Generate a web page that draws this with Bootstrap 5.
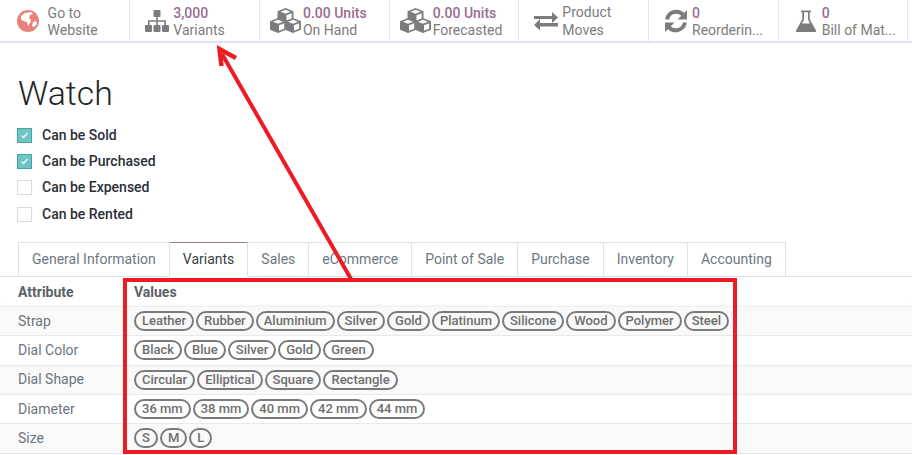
<!DOCTYPE html>
<html lang="en">
<head>
    <meta charset="UTF-8">
    <meta name="viewport" content="width=device-width, initial-scale=1.0">
    <title>Watch</title>
    <link href="https://cdn.jsdelivr.net/npm/bootstrap@5.3.0/dist/css/bootstrap.min.css" rel="stylesheet">
    <style>
        html, body { height: 455px; overflow: hidden; }
        body {
            font-family: Roboto, "Liberation Sans", sans-serif;
            font-size: 14px;
            color: #212529;
            background: #fff;
            position: relative;
        }
        .stat-bar { height: 43px; border-bottom: 2px solid #dee2ea; padding-left: 0.6px; }
        .stat-item {
            width: 129.7px;
            flex: none;
            border-right: 1px solid #e2e5ec;
            padding-left: 14px;
            color: #7c7c7c;
            line-height: 16.5px;
            font-size: 14px;
        }
        .stat-icon { width: 26px; height: 26px; flex: none; margin-right: 3px; }
        .stat-icon.globe-icon { margin-right: 7px; }
        .stat-icon.cube-icon { width: 31px; margin-left: -4px; margin-right: 2px; }
        .stat-text { min-width: 0; white-space: nowrap; padding-top: 2px; }
        .stat-text.loose { line-height: 18px; padding-top: 1px; }
        .stat-num { color: #9a6c8e; font-weight: 500; }
        .product-name { font-size: 33.8px; font-weight: 300; line-height: 42px; margin: 30px 0 0 18px; color: #212529; }
        .flag-list { margin: 7px 0 0 17px; }
        .flag-row { height: 26.35px; font-weight: 500; color: #2b2f36; }
        .flag-box {
            width: 15px; height: 15px; margin-right: 10px;
            border: 1px solid #dcdcdc; background: #fff;
        }
        .flag-box.on { background: #6ec5c3; border-color: #43a6a3; }
        .tab-row { margin-top: 15px; height: 35px; padding-left: 18px; border-bottom: 1px solid #dee2e6; }
        .tab-item {
            height: 35px; padding: 0 13px; line-height: 33px;
            border: 1px solid #dee2e6; border-left: 0; color: #6f7880; white-space: nowrap;
        }
        .tab-item:first-child { border-left: 1px solid #dee2e6; }
        .tab-item.on { background: #fff; border-top-color: #9a7c94; border-bottom-color: #fff; color: #3a3f46; }
        .var-table { font-size: 14px; color: #6c757d; }
        .var-row { height: 29.35px; border-bottom: 1px solid #e6e9ee; }
        .var-head { height: 29.5px; font-weight: 700; color: #5c6167; border-bottom: 0; box-shadow: inset 0 -3px 3px -2px #e8e8e8; }
        .var-row.tint { background: #f9f9f9; }
        .var-name { width: 134px; padding-left: 18px; flex: none; }
        .pill-list { gap: 2px; }
        .val-pill {
            height: 20px; line-height: 16px; padding: 0 6px;
            border: 2px solid #7a7a7a; border-radius: 10px;
            font-size: 13px; font-weight: 500; color: #6e6e6e; white-space: nowrap;
        }
        .overlay-art { position: absolute; left: 0; top: 0; pointer-events: none; }
    </style>
</head>
<body>
    <div class="stat-bar d-flex">
        <div class="stat-item d-flex align-items-center">
            <svg class="stat-icon globe-icon" viewBox="0 0 26 26"><circle cx="13" cy="13" r="11" fill="#e7827d"/><path d="M6 8l4-3 6-1 2 2-3 1-1 3 2 2-1 3-2 3-1-4-4-1-2-2zM18 14l3-1 1 3-3 3-2-1z" fill="#fff"/></svg>
            <div class="stat-text">Go to<br>Website</div>
        </div>
        <div class="stat-item d-flex align-items-center">
            <svg class="stat-icon" viewBox="0 0 26 26"><g fill="#7c7c7c"><rect x="9.5" y="2" width="7" height="7" rx="1"/><rect x="1" y="17" width="7" height="7" rx="1"/><rect x="9.500" y="17" width="7" height="7" rx="1"/><rect x="18" y="17" width="7" height="7" rx="1"/><path d="M12.200 9h1.600v3.200H22V17h-1.600v-3.200h-6.600V17h-1.600v-3.200H5.600V17H4v-4.800h8.200z"/></g></svg>
            <div class="stat-text"><span class="stat-num">3,000</span><br>Variants</div>
        </div>
        <div class="stat-item d-flex align-items-center">
            <svg class="stat-icon cube-icon" viewBox="0 0 31 26"><defs><g id="cube"><path d="M8 0l8 3.200v8.600L8 15 0 11.800V3.200z" fill="#7c7c7c"/><path d="M8 1.800l5 2-5 2-5-2z" fill="#fff"/><path d="M9 7.200l5.200-2v5.600L9 12.800z" fill="#fff"/></g></defs><use href="#cube" x="7.500" y="0"/><use href="#cube" x="0" y="10"/><use href="#cube" x="15" y="10"/></svg>
            <div class="stat-text"><span class="stat-num">0.00 Units</span><br>On Hand</div>
        </div>
        <div class="stat-item d-flex align-items-center">
            <svg class="stat-icon cube-icon" viewBox="0 0 31 26"><use href="#cube" x="7.500" y="0"/><use href="#cube" x="0" y="10"/><use href="#cube" x="15" y="10"/></svg>
            <div class="stat-text"><span class="stat-num">0.00 Units</span><br>Forecasted</div>
        </div>
        <div class="stat-item d-flex align-items-center">
            <svg class="stat-icon" viewBox="0 0 26 26"><path d="M1 8h18V4l6 5.500-6 5.500v-4H1zM25 15H7v-4l-6 6 6 5.500v-4h18z" fill="#7c7c7c"/></svg>
            <div class="stat-text loose">Product<br>Moves</div>
        </div>
        <div class="stat-item d-flex align-items-center">
            <svg class="stat-icon" viewBox="0 0 26 26"><g fill="none" stroke="#7c7c7c" stroke-width="4"><path d="M4 11.500a9.500 9.500 0 0 1 16-5"/><path d="M22 14.500a9.500 9.500 0 0 1-16 5"/></g><path d="M24 2v9.500h-9.500zM2 24v-9.500h9.500z" fill="#7c7c7c"/></svg>
            <div class="stat-text"><span class="stat-num">0</span><br>Reorderin...</div>
        </div>
        <div class="stat-item d-flex align-items-center">
            <svg class="stat-icon" viewBox="0 0 26 26"><path d="M8 2.500h10v1.800h-1.300v7L23 22.500c.5 1-.2 1.500-1 1.500H4c-.8 0-1.500-.5-1-1.500l6.300-11.200v-7H8zM11 4.300v7.500L9 15.500h8l-2-3.700V4.300z" fill="#7c7c7c"/></svg>
            <div class="stat-text"><span class="stat-num">0</span><br>Bill of Mat...</div>
        </div>
    </div>

    <h1 class="product-name">Watch</h1>

    <div class="flag-list">
        <div class="flag-row d-flex align-items-center">
            <span class="flag-box on d-flex align-items-center justify-content-center"><svg width="9" height="9" viewBox="0 0 9 9"><path d="M1.500 4.500l2 2 4-4.500" fill="none" stroke="#e8f6f5" stroke-width="1.500"/></svg></span>Can be Sold
        </div>
        <div class="flag-row d-flex align-items-center">
            <span class="flag-box on d-flex align-items-center justify-content-center"><svg width="9" height="9" viewBox="0 0 9 9"><path d="M1.500 4.500l2 2 4-4.500" fill="none" stroke="#e8f6f5" stroke-width="1.500"/></svg></span>Can be Purchased
        </div>
        <div class="flag-row d-flex align-items-center"><span class="flag-box"></span>Can be Expensed</div>
        <div class="flag-row d-flex align-items-center"><span class="flag-box"></span>Can be Rented</div>
    </div>

    <div class="tab-row d-flex">
        <div class="tab-item">General Information</div>
        <div class="tab-item on">Variants</div>
        <div class="tab-item">Sales</div>
        <div class="tab-item">eCommerce</div>
        <div class="tab-item">Point of Sale</div>
        <div class="tab-item">Purchase</div>
        <div class="tab-item">Inventory</div>
        <div class="tab-item">Accounting</div>
    </div>

    <div class="var-table">
        <div class="var-row var-head d-flex align-items-center">
            <div class="var-name">Attribute</div><div>Values</div>
        </div>
        <div class="var-row tint d-flex align-items-center">
            <div class="var-name">Strap</div>
            <div class="pill-list d-flex">
                <span class="val-pill">Leather</span><span class="val-pill">Rubber</span><span class="val-pill">Aluminium</span><span class="val-pill">Silver</span><span class="val-pill">Gold</span><span class="val-pill">Platinum</span><span class="val-pill">Silicone</span><span class="val-pill">Wood</span><span class="val-pill">Polymer</span><span class="val-pill">Steel</span>
            </div>
        </div>
        <div class="var-row d-flex align-items-center">
            <div class="var-name">Dial Color</div>
            <div class="pill-list d-flex">
                <span class="val-pill">Black</span><span class="val-pill">Blue</span><span class="val-pill">Silver</span><span class="val-pill">Gold</span><span class="val-pill">Green</span>
            </div>
        </div>
        <div class="var-row tint d-flex align-items-center">
            <div class="var-name">Dial Shape</div>
            <div class="pill-list d-flex">
                <span class="val-pill">Circular</span><span class="val-pill">Elliptical</span><span class="val-pill">Square</span><span class="val-pill">Rectangle</span>
            </div>
        </div>
        <div class="var-row d-flex align-items-center">
            <div class="var-name">Diameter</div>
            <div class="pill-list d-flex">
                <span class="val-pill">36 mm</span><span class="val-pill">38 mm</span><span class="val-pill">40 mm</span><span class="val-pill">42 mm</span><span class="val-pill">44 mm</span>
            </div>
        </div>
        <div class="var-row tint d-flex align-items-center">
            <div class="var-name">Size</div>
            <div class="pill-list d-flex">
                <span class="val-pill">S</span><span class="val-pill">M</span><span class="val-pill">L</span>
            </div>
        </div>
    </div>

    <!-- red annotation drawn over the page -->
    <svg class="overlay-art" width="912" height="455" viewBox="0 0 912 455">
        <rect x="125" y="280" width="610" height="172" fill="none" stroke="#ed1c24" stroke-width="4"/>
        <path d="M351 279L222 54" fill="none" stroke="#ed1c24" stroke-width="4"/>
        <path d="M221.500 66L219.500 49L236 58" fill="none" stroke="#ed1c24" stroke-width="4.500"/>
    </svg>

    <script src="https://cdn.jsdelivr.net/npm/bootstrap@5.3.0/dist/js/bootstrap.bundle.min.js"></script>
</body>
</html>
